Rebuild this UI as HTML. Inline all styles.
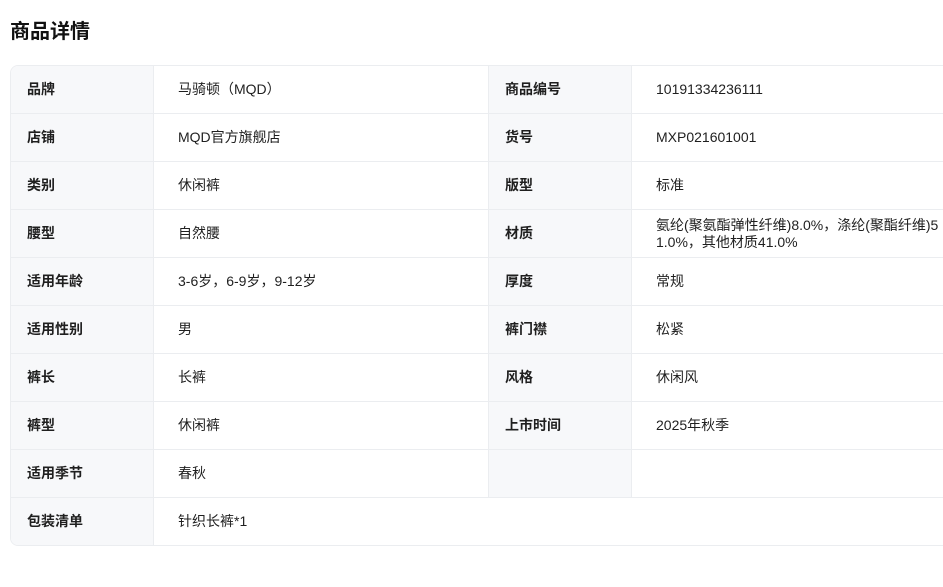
<!DOCTYPE html>
<html><head><meta charset="utf-8"><style>
body{margin:0;background:#fff;font-family:"Liberation Sans","Noto Sans CJK SC",sans-serif;color:#1f1f1f;width:943px;height:587px;overflow:hidden;position:relative}
h1{position:absolute;left:10px;top:18px;margin:0;font-size:20px;font-weight:bold;line-height:28px;color:#111}
table{position:absolute;left:10px;top:65px;width:950px;border-collapse:separate;border-spacing:0;border:1px solid #ebedf0;border-radius:8px;overflow:hidden;table-layout:fixed}
td{height:47px;border-bottom:1px solid #ebedf0;font-size:14px;padding:0;vertical-align:middle;line-height:17px}
tr:last-child td{border-bottom:none}
td.l{background:#f7f8fa;font-weight:bold;padding-left:16px;font-size:14px;border-right:1px solid #ebedf0}
td.v{padding-left:24px;border-right:1px solid #ebedf0}
td.v2{padding-left:24px}
</style></head><body>
<h1>商品详情</h1>
<table>
<colgroup><col style="width:143px"><col style="width:335px"><col style="width:143px"><col></colgroup>
<tr><td class="l">品牌</td><td class="v">马骑顿（MQD）</td><td class="l">商品编号</td><td class="v2">10191334236111</td></tr>
<tr><td class="l">店铺</td><td class="v">MQD官方旗舰店</td><td class="l">货号</td><td class="v2">MXP021601001</td></tr>
<tr><td class="l">类别</td><td class="v">休闲裤</td><td class="l">版型</td><td class="v2">标准</td></tr>
<tr><td class="l">腰型</td><td class="v">自然腰</td><td class="l">材质</td><td class="v2" style="padding-right:12px;word-break:break-all">氨纶(聚氨酯弹性纤维)8.0%，涤纶(聚酯纤维)51.0%，其他材质41.0%</td></tr>
<tr><td class="l">适用年龄</td><td class="v">3-6岁，6-9岁，9-12岁</td><td class="l">厚度</td><td class="v2">常规</td></tr>
<tr><td class="l">适用性别</td><td class="v">男</td><td class="l">裤门襟</td><td class="v2">松紧</td></tr>
<tr><td class="l">裤长</td><td class="v">长裤</td><td class="l">风格</td><td class="v2">休闲风</td></tr>
<tr><td class="l">裤型</td><td class="v">休闲裤</td><td class="l">上市时间</td><td class="v2">2025年秋季</td></tr>
<tr><td class="l">适用季节</td><td class="v">春秋</td><td class="l"></td><td class="v2"></td></tr>
<tr><td class="l">包装清单</td><td class="v2" colspan="3">针织长裤*1</td></tr>
</table>
</body></html>
